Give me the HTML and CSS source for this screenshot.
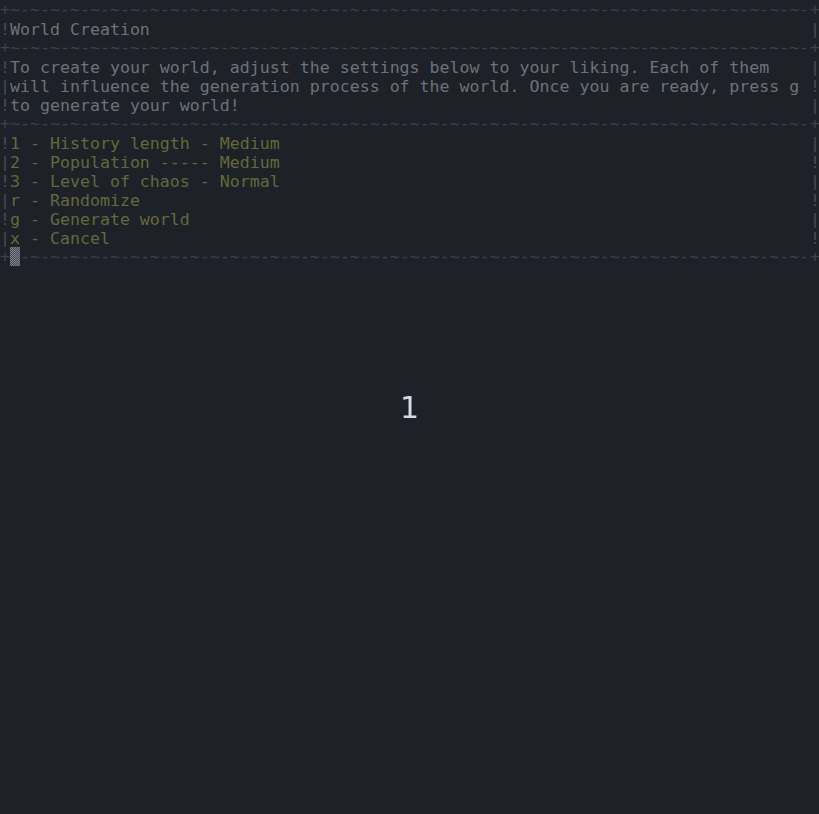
FILE: index.html
```html
<!DOCTYPE html>
<html lang="en">
<head>
  <meta charset="UTF-8">
  <title>World Creation</title>
  <link rel="stylesheet" href="styles.css">
</head>
<body>
  <!-- Terminal screen -->
  <div class="screen">
    <div class="row border"><span class="corner">+</span><span class="line">~-~-~-~-~-~-~-~-~-~-~-~-~-~-~-~-~-~-~-~-~-~-~-~-~-~-~-~-~-~-~-~-~-~-~-~-~-~-~-~-</span><span class="corner">+</span></div>
    <div class="row"><span class="edge">!</span><span class="text">World Creation</span><span class="edge">|</span></div>
    <div class="row border"><span class="corner">+</span><span class="line">~-~-~-~-~-~-~-~-~-~-~-~-~-~-~-~-~-~-~-~-~-~-~-~-~-~-~-~-~-~-~-~-~-~-~-~-~-~-~-~-</span><span class="corner">+</span></div>
    <div class="row"><span class="edge">!</span><span class="text">To create your world, adjust the settings below to your liking. Each of them</span><span class="edge">|</span></div>
    <div class="row"><span class="edge">|</span><span class="text">will influence the generation process of the world. Once you are ready, press g</span><span class="edge">!</span></div>
    <div class="row"><span class="edge">!</span><span class="text">to generate your world!</span><span class="edge">|</span></div>
    <div class="row border"><span class="corner">+</span><span class="line">~-~-~-~-~-~-~-~-~-~-~-~-~-~-~-~-~-~-~-~-~-~-~-~-~-~-~-~-~-~-~-~-~-~-~-~-~-~-~-~-</span><span class="corner">+</span></div>
    <div class="row"><span class="edge">!</span><span class="text option">1 - History length - Medium</span><span class="edge">|</span></div>
    <div class="row"><span class="edge">|</span><span class="text option">2 - Population ----- Medium</span><span class="edge">!</span></div>
    <div class="row"><span class="edge">!</span><span class="text option">3 - Level of chaos - Normal</span><span class="edge">|</span></div>
    <div class="row"><span class="edge">|</span><span class="text option">r - Randomize</span><span class="edge">!</span></div>
    <div class="row"><span class="edge">!</span><span class="text option">g - Generate world</span><span class="edge">|</span></div>
    <div class="row"><span class="edge">|</span><span class="text option">x - Cancel</span><span class="edge">!</span></div>
    <div class="row border"><span class="corner">+</span><span class="cursor"></span><span class="line">-~-~-~-~-~-~-~-~-~-~-~-~-~-~-~-~-~-~-~-~-~-~-~-~-~-~-~-~-~-~-~-~-~-~-~-~-~-~-~-</span><span class="corner">+</span></div>
  </div>

  <!-- Page counter overlay -->
  <div class="counter">1</div>
</body>
</html>
```

FILE: styles.css
```css
/* Reset */
* {
  margin: 0;
  padding: 0;
  box-sizing: border-box;
}

body {
  background-color: #1e2128;
  overflow: hidden;
  height: 814px;
}

/* Terminal screen */
.screen {
  width: 820px;
  font-family: 'DejaVu Sans Mono', 'Liberation Mono', monospace;
  font-size: 16.6px;
  line-height: 19px;
  color: #6e7279;
}

.row {
  display: flex;
  height: 19px;
  white-space: pre;
}

.row .edge,
.row .corner {
  flex: none;
  width: 10px;
  overflow: hidden;
}

.row .edge {
  color: #464b56;
  padding-top: 1px;
}

.row .text {
  flex: 1;
  min-width: 0;
  overflow: hidden;
  padding-top: 1px;
}

.row .option {
  color: #65683b;
}

.border {
  color: #3c414b;
}

.border .line {
  flex: 1;
  min-width: 0;
  overflow: hidden;
}

.cursor {
  flex: none;
  width: 10px;
  height: 19px;
  background-color: #4a4e56;
  background-image: repeating-conic-gradient(#7c8087 0 25%, #4a4e56 0 50%);
  background-size: 2px 2px;
}

/* Counter overlay */
.counter {
  position: fixed;
  top: 50%;
  left: 50%;
  transform: translate(-50%, -50%);
  font-family: 'DejaVu Sans', sans-serif;
  font-size: 30px;
  color: #d3dbe8;
}
```
